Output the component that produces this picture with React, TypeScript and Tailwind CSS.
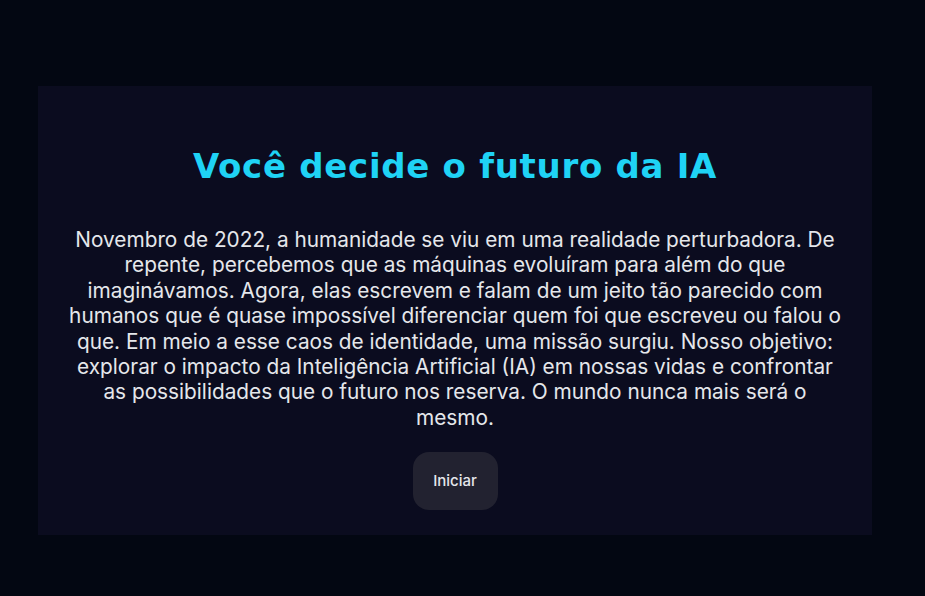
export default function App() {
  return (
    <main className="min-h-screen w-full bg-[#030712] pt-[86px] pb-[61px] font-['Inter',sans-serif]">
      <section className="ml-[38px] w-[834px] h-[449px] bg-[#0b0c1f] flex flex-col items-center pt-[44px]">
        <h1 className="text-[34px] leading-[72px] font-bold text-[#1fd3f5] tracking-[0.7px] font-['DejaVu_Sans',sans-serif]">
          Você decide o futuro da IA
        </h1>
        <p className="mt-[25px] w-[778px] text-center text-[20.8px] leading-[25.4px] text-[#e5e7eb]">
          Novembro de 2022, a humanidade se viu em uma realidade perturbadora. De repente, percebemos que as máquinas evoluíram para além do que imaginávamos. Agora, elas escrevem e falam de um jeito tão parecido com humanos que é quase impossível diferenciar quem foi que escreveu ou falou o que. Em meio a esse caos de identidade, uma missão surgiu. Nosso objetivo: explorar o impacto da Inteligência Artificial (IA) em nossas vidas e confrontar as possibilidades que o futuro nos reserva. O mundo nunca mais será o mesmo.
        </p>
        <button className="mt-[22px] w-[85px] h-[58px] rounded-2xl bg-[#222230] text-[15px] font-medium text-[#e5e7eb]">
          Iniciar
        </button>
      </section>
    </main>
  );
}
